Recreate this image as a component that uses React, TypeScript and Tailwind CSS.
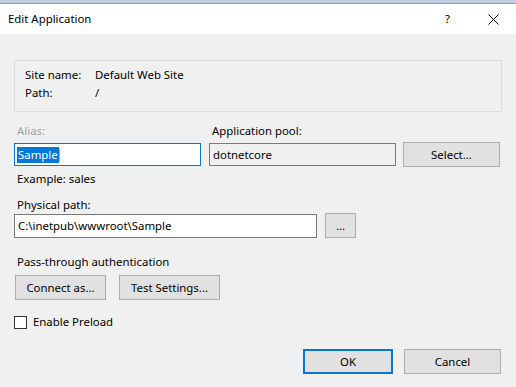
import React from "react";

const font = { fontFamily: '"Segoe UI", "Noto Sans", "Open Sans", sans-serif' };

function Button({ children, className = "", primary = false }: { children: React.ReactNode; className?: string; primary?: boolean }) {
  return (
    <div
      className={
        "flex items-center justify-center bg-[#e1e1e1] text-black " +
        (primary ? "border-2 border-[#0078d7] " : "border border-[#adadad] ") +
        className
      }
    >
      {children}
    </div>
  );
}

export default function App() {
  return (
    <div className="w-[516px] h-[387px] bg-[#f0f0f0] text-[11.4px] leading-[16px] text-black overflow-hidden" style={font}>
      {/* Title bar */}
      <div className="h-[3px] bg-[#c3cde0]" />
      <div className="h-[1px] bg-[#8d99ad]" />
      <div className="h-[30px] bg-white flex items-center pl-[8px] pr-[16px]">
        <span>Edit Application</span>
        <span className="ml-auto mr-[38px]">?</span>
        <svg width="11" height="11" viewBox="0 0 11 11" className="mr-[1px]">
          <path d="M0.5 0.5 L10.5 10.5 M10.5 0.5 L0.5 10.5" stroke="#000" strokeWidth="1" />
        </svg>
      </div>

      <div className="px-[14px] pt-[26px]">
        {/* Site info group */}
        <div className="w-[488px] h-[52px] border border-[#dcdcdc] pt-[6px] pl-[10px]">
          <div className="flex h-[16px]">
            <span className="w-[70px]">Site name:</span>
            <span>Default Web Site</span>
          </div>
          <div className="flex h-[16px] mt-[2px]">
            <span className="w-[70px]">Path:</span>
            <span>/</span>
          </div>
        </div>

        {/* Alias / App pool */}
        <div className="flex mt-[11px]">
          <span className="w-[195px] pl-[3px] text-[#a0a0a0]">Alias:</span>
          <span className="pl-[3px]">Application pool:</span>
        </div>
        <div className="flex items-center mt-[3px]">
          <div className="w-[187px] h-[23px] border border-[#0078d7] bg-white flex items-center pl-[2px]">
            <span className="bg-[#0078d7] text-white px-[1px]">Sample</span>
            <span className="w-[1px] h-[14px] bg-[#f5a030]" />
          </div>
          <div className="w-[187px] h-[23px] ml-[8px] border border-[#7a7a7a] bg-[#f0f0f0] flex items-center pl-[3px]">
            dotnetcore
          </div>
          <Button className="w-[97px] h-[25px] ml-[7px]">Select...</Button>
        </div>
        <div className="mt-[4px] pl-[3px]">Example: sales</div>

        {/* Physical path */}
        <div className="mt-[10px] pl-[3px]">Physical path:</div>
        <div className="flex items-center">
          <div className="w-[303px] h-[24px] border border-[#7a7a7a] bg-white flex items-center pl-[3px]">
            C:\inetpub\wwwroot\Sample
          </div>
          <Button className="w-[31px] h-[25px] ml-[8px]">...</Button>
        </div>

        {/* Pass-through */}
        <div className="mt-[16px] pl-[3px]">Pass-through authentication</div>
        <div className="flex mt-[5px] pl-[1px]">
          <Button className="w-[91px] h-[25px]">Connect as...</Button>
          <Button className="w-[101px] h-[25px] ml-[13px]">Test Settings...</Button>
        </div>

        {/* Checkbox */}
        <div className="flex items-center mt-[14px]">
          <div className="w-[13px] h-[13px] border border-[#333] bg-white" />
          <span className="ml-[6px]">Enable Preload</span>
        </div>

        {/* Footer buttons */}
        <div className="flex justify-end mt-[19px] pr-[1px]">
          <Button primary className="w-[90px] h-[25px]">OK</Button>
          <Button className="w-[97px] h-[25px] ml-[11px]">Cancel</Button>
        </div>
      </div>
    </div>
  );
}
